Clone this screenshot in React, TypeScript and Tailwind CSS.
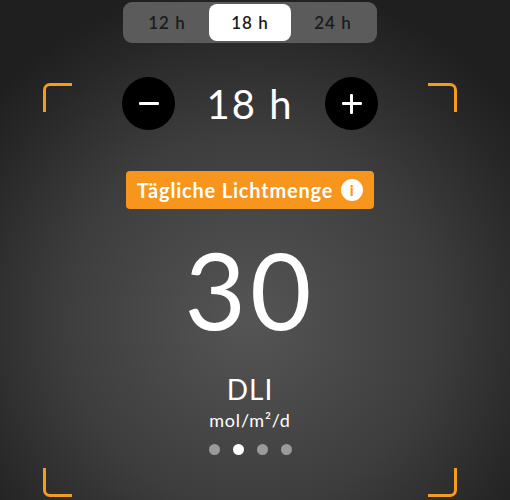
import React from "react";

function Bracket({ pos }: { pos: "tl" | "tr" | "bl" | "br" }) {
  const cls: Record<string, string> = {
    tl: "left-[43px] top-[83px] border-l-[3px] border-t-[3px] rounded-tl-[7px]",
    tr: "left-[428px] top-[83px] border-r-[3px] border-t-[3px] rounded-tr-[7px]",
    bl: "left-[43px] top-[468px] border-l-[3px] border-b-[3px] rounded-bl-[7px]",
    br: "left-[428px] top-[468px] border-r-[3px] border-b-[3px] rounded-br-[7px]",
  };
  return <div className={`absolute w-[29px] h-[29px] border-[#f39c1f] ${cls[pos]}`} />;
}

export default function App() {
  return (
    <div
      className="relative w-[510px] h-[500px] overflow-hidden text-white"
      style={{
        fontFamily: "Lato, 'Open Sans', sans-serif",
        background:
          "radial-gradient(ellipse 340px 340px at 250px 320px, #555555 0%, #3d3d3d 55%, #282828 85%, #1f1f1f 100%)",
      }}
    >
      <Bracket pos="tl" />
      <Bracket pos="tr" />
      <Bracket pos="bl" />
      <Bracket pos="br" />

      <div className="w-[500px] flex flex-col items-center">
        <div className="mt-[2px] flex items-center w-[254px] h-[41px] rounded-[9px] bg-[#5b5b5b] px-[2px] text-[17px] font-semibold tracking-[1px] text-[#1c1c1c]">
          <div className="flex-1 text-center">12 h</div>
          <div className="w-[82px] h-[37px] flex items-center justify-center rounded-[8px] bg-white">18 h</div>
          <div className="flex-1 text-center">24 h</div>
        </div>

        <div className="mt-[34px] flex items-center gap-[30px]">
          <div className="w-[53px] h-[53px] rounded-full bg-black flex items-center justify-center">
            <div className="w-[20px] h-[3px] bg-white rounded-[1px]" />
          </div>
          <div className="w-[90px] text-center text-[40px] leading-none font-normal tracking-[2px]">18 h</div>
          <div className="w-[53px] h-[53px] rounded-full bg-black flex items-center justify-center relative">
            <div className="w-[20px] h-[3px] bg-white rounded-[1px]" />
            <div className="absolute w-[3px] h-[20px] bg-white rounded-[1px]" />
          </div>
        </div>

        <div className="mt-[41px] flex items-center justify-center gap-[8px] w-[248px] h-[38px] rounded-[4px] bg-[#f7951d] text-[20px] font-bold tracking-[0.8px]">
          <span>Tägliche Lichtmenge</span>
          <span className="w-[22px] h-[22px] rounded-full bg-white text-[#f7951d] flex items-center justify-center text-[15px] font-black leading-none">i</span>
        </div>

        <div className="mt-[27px] text-[106px] leading-none tracking-[4px]">30</div>

        <div className="mt-[33px] text-[28px] leading-none tracking-[1px]">DLI</div>
        <div className="mt-[8px] text-[18px] leading-none tracking-[0.8px]">mol/m²/d</div>

        <div className="mt-[15px] flex gap-[13px]">
          <div className="w-[11px] h-[11px] rounded-full bg-[#9a9a9a]" />
          <div className="w-[11px] h-[11px] rounded-full bg-white" />
          <div className="w-[11px] h-[11px] rounded-full bg-[#9a9a9a]" />
          <div className="w-[11px] h-[11px] rounded-full bg-[#9a9a9a]" />
        </div>
      </div>
    </div>
  );
}
